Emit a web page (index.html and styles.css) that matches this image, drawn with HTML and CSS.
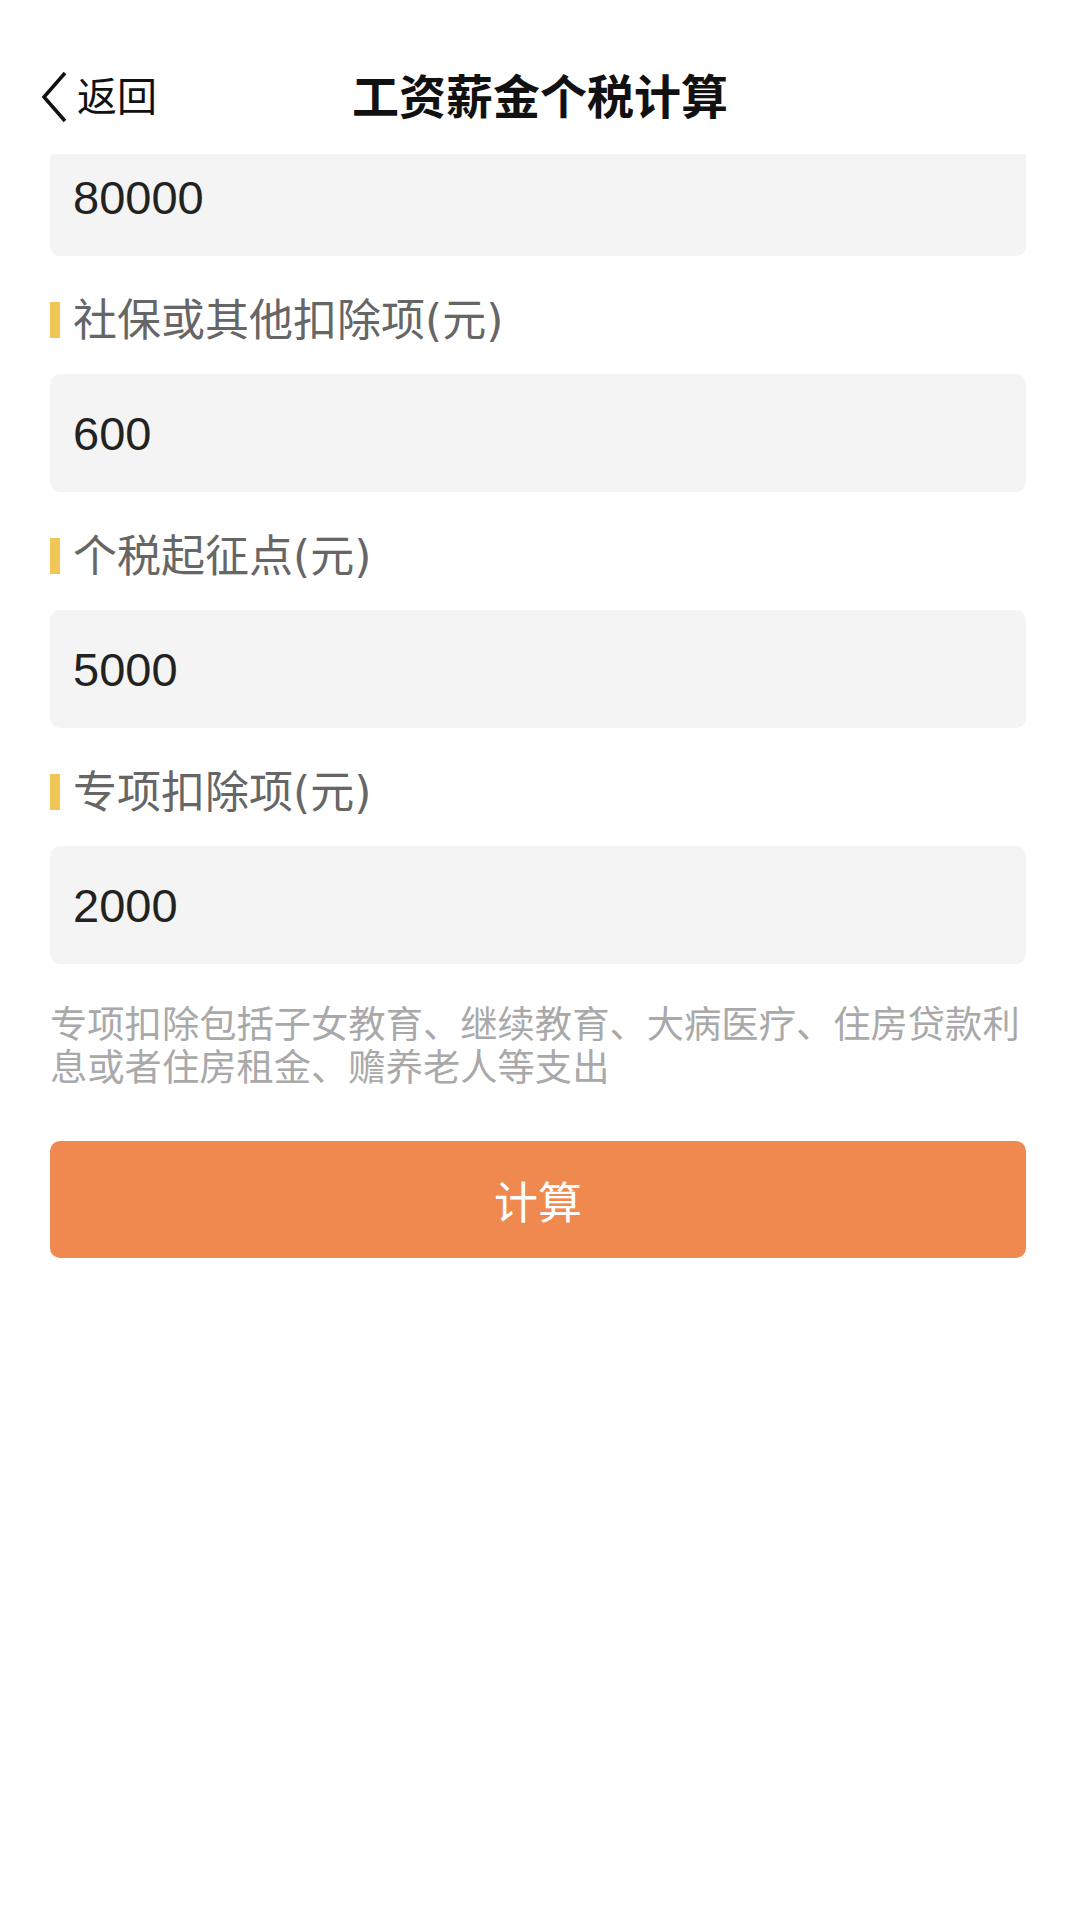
FILE: index.html
```html
<!DOCTYPE html>
<html lang="zh-CN">
<head>
    <meta charset="UTF-8">
    <meta name="viewport" content="width=device-width, initial-scale=1.0">
    <title>工资薪金个税计算</title>
    <link rel="stylesheet" href="styles.css">
</head>
<body>
    <header class="nav">
        <a class="nav-back" href="#">
            <svg class="nav-chevron" width="28" height="52" viewBox="0 0 28 52">
                <path d="M25 2 L4 26 L25 50" fill="none" stroke="#111" stroke-width="3.5" stroke-linejoin="miter"/>
            </svg>
            <span>返回</span>
        </a>
        <h1 class="nav-title">工资薪金个税计算</h1>
    </header>

    <main class="content">
        <form class="calc-form" id="calcForm">
            <input class="field-input" type="text" id="salario" value="80000">

            <label class="field-label" for="shebao">社保或其他扣除项(元)</label>
            <input class="field-input" type="text" id="shebao" value="600">

            <label class="field-label" for="qizheng">个税起征点(元)</label>
            <input class="field-input" type="text" id="qizheng" value="5000">

            <label class="field-label" for="zhuanxiang">专项扣除项(元)</label>
            <input class="field-input" type="text" id="zhuanxiang" value="2000">

            <p class="field-note">专项扣除包括子女教育、继续教育、大病医疗、住房贷款利息或者住房租金、赡养老人等支出</p>

            <button class="calc-button" type="button">计算</button>
        </form>
    </main>
</body>
</html>
```

FILE: styles.css
```css
* {
    box-sizing: border-box;
}
body {
    margin: 0;
    width: 1080px;
    height: 1920px;
    background-color: #ffffff;
    font-family: "Noto Sans CJK SC", sans-serif;
    color: #222;
}
.nav {
    position: relative;
    height: 154px;
    padding-top: 33px;
    display: flex;
    align-items: center;
    justify-content: center;
    background-color: #ffffff;
}
.nav-back {
    position: absolute;
    left: 40px;
    top: 71px;
    display: flex;
    align-items: flex-start;
    gap: 9px;
    color: #111;
    text-decoration: none;
    font-size: 40px;
}
.nav-back span {
    line-height: 46px;
}
.nav-chevron {
    display: block;
}
.nav-title {
    margin: 0;
    font-size: 47px;
    font-weight: bold;
    color: #111;
    line-height: 112px;
}
.content {
    overflow: hidden;
    padding: 0 54px 0 50px;
}
.calc-form {
    display: flex;
    flex-direction: column;
    margin-top: -16px;
}
.field-input {
    display: block;
    width: 100%;
    height: 118px;
    padding: 0 23px;
    border: none;
    border-radius: 10px;
    background-color: #f4f4f4;
    font-family: "Liberation Sans", "Noto Sans CJK SC", sans-serif;
    font-size: 47px;
    color: #222;
    outline: none;
}
.field-label {
    display: flex;
    align-items: flex-start;
    height: 44px;
    margin: 42px 0 32px;
    font-family: "DejaVu Sans", "Noto Sans CJK SC", sans-serif;
    font-size: 44px;
    line-height: 46px;
    color: #666;
}
.field-label::before {
    content: "";
    flex: none;
    width: 10px;
    height: 36px;
    margin-top: 4px;
    margin-right: 13px;
    background-color: #f1c556;
}
.field-note {
    margin: 37px 0 0;
    font-size: 37.3px;
    line-height: 43px;
    color: #a9a9a9;
}
.calc-button {
    width: 100%;
    height: 117px;
    margin-top: 54px;
    border: none;
    border-radius: 10px;
    background-color: #f0894f;
    color: #fff;
    font-family: inherit;
    font-size: 44px;
    cursor: pointer;
}
```
